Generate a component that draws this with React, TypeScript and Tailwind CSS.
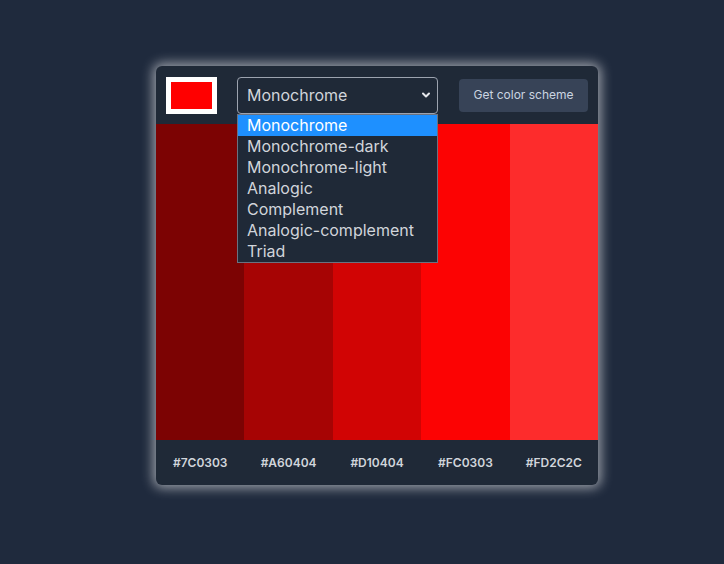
import React from "react";

const colors = ["#7C0303", "#A60404", "#D10404", "#FC0303", "#FD2C2C"];
const options = [
  "Monochrome",
  "Monochrome-dark",
  "Monochrome-light",
  "Analogic",
  "Complement",
  "Analogic-complement",
  "Triad",
];

export default function App() {
  return (
    <div
      className="w-[724px] h-[564px] bg-[#1f2a3d] pt-[66px] pl-[156px]"
      style={{ fontFamily: "Inter, 'Noto Sans', sans-serif" }}
    >
      <div className="relative w-[442px] rounded-[6px] bg-[#1f2937] shadow-[0_0_12px_3px_rgba(255,255,255,0.55)]">
        <div className="flex h-[58px] items-center px-[10px]">
          <div className="h-[37px] w-[51px] bg-white p-[5px]">
            <div className="h-full w-full bg-[#ff0000]" />
          </div>
          <div className="relative ml-[20px] flex h-[37px] w-[201px] items-center justify-between rounded-[4px] border border-[#9ca3af] bg-[#1f2937] pl-[9px] pr-[5px] text-[16px] text-[#d1d5db]">
            <span>Monochrome</span>
            <svg width="12" height="12" viewBox="0 0 12 12" fill="none">
              <path d="M3 4.5 L6 7.5 L9 4.5" stroke="#e5e7eb" strokeWidth="2" strokeLinecap="round" strokeLinejoin="round" />
            </svg>
            <div className="absolute left-[-1px] top-[36px] z-10 w-[201px] border border-[#6b7280] bg-[#1f2937]">
              {options.map((o, i) => (
                <div
                  key={o}
                  className={
                    "h-[21px] pl-[9px] text-[16px] leading-[21px] " +
                    (i === 0 ? "bg-[#1e90ff] text-white" : "text-[#d1d5db]")
                  }
                >
                  {o}
                </div>
              ))}
            </div>
          </div>
          <button className="ml-auto h-[33px] w-[129px] rounded-[4px] bg-[#374357] text-[12px] text-[#cbd5e1]">
            Get color scheme
          </button>
        </div>
        <div className="flex h-[316px]">
          {colors.map((c) => (
            <div key={c} className="flex-1" style={{ backgroundColor: c }} />
          ))}
        </div>
        <div className="flex h-[45px] items-center">
          {colors.map((c) => (
            <div key={c} className="flex-1 text-center text-[12px] font-semibold text-[#d1d5db]">
              {c}
            </div>
          ))}
        </div>
      </div>
    </div>
  );
}
